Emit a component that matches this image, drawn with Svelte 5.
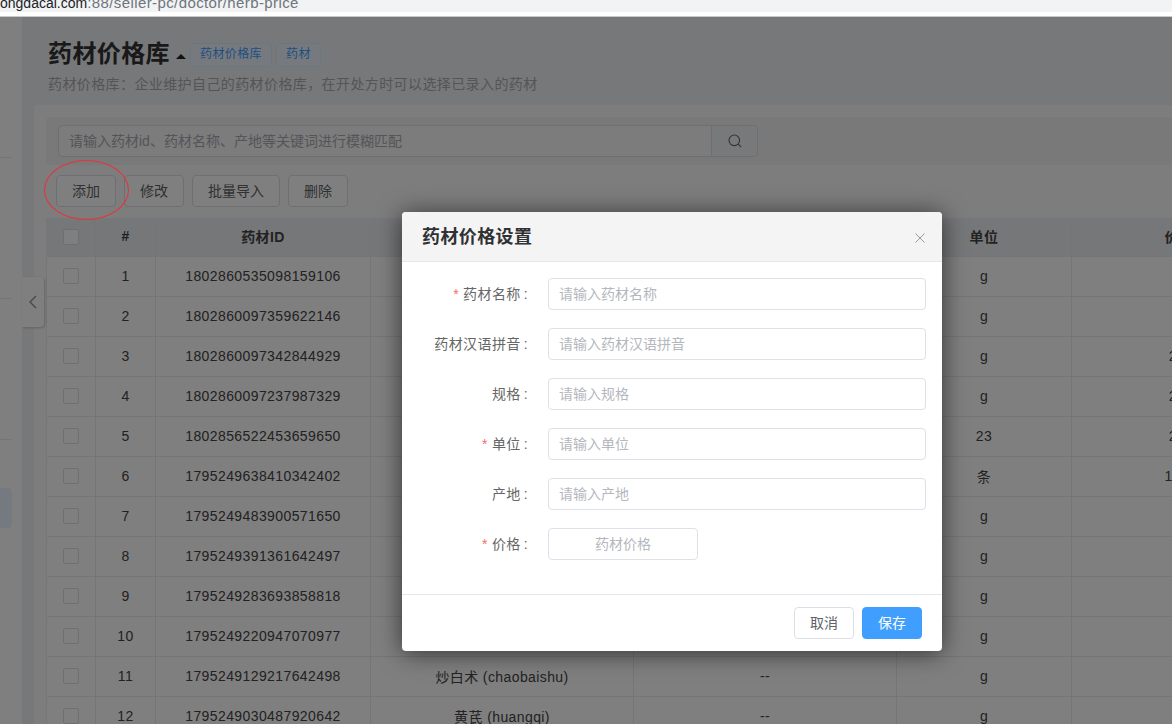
<script>
  const rows = [
    { id: '1802860535098159106', name: '', other: '', unit: 'g', price: '' },
    { id: '1802860097359622146', name: '', other: '', unit: 'g', price: '' },
    { id: '1802860097342844929', name: '', other: '', unit: 'g', price: '2.5' },
    { id: '1802860097237987329', name: '', other: '', unit: 'g', price: '2.5' },
    { id: '1802856522453659650', name: '', other: '', unit: '23', price: '2.5' },
    { id: '1795249638410342402', name: '', other: '', unit: '条', price: '15.5' },
    { id: '1795249483900571650', name: '', other: '', unit: 'g', price: '' },
    { id: '1795249391361642497', name: '', other: '', unit: 'g', price: '' },
    { id: '1795249283693858818', name: '', other: '', unit: 'g', price: '' },
    { id: '1795249220947070977', name: '', other: '', unit: 'g', price: '' },
    { id: '1795249129217642498', name: '炒白术 (chaobaishu)', other: '--', unit: 'g', price: '' },
    { id: '1795249030487920642', name: '黄芪 (huangqi)', other: '--', unit: 'g', price: '' }
  ];

  const fields = [
    { label: '药材名称', required: true, placeholder: '请输入药材名称' },
    { label: '药材汉语拼音', required: false, placeholder: '请输入药材汉语拼音' },
    { label: '规格', required: false, placeholder: '请输入规格' },
    { label: '单位', required: true, placeholder: '请输入单位' },
    { label: '产地', required: false, placeholder: '请输入产地' }
  ];
</script>

<div class="browser">
  <div class="url"><span class="host">ongdacai.com</span>:88/seller-pc/doctor/herb-price</div>
</div>

<div class="page">
  <aside class="sidebar">
    <div class="side-line"></div>
    <div class="side-line"></div>
    <div class="side-line"></div>
    <div class="side-active"></div>
  </aside>

  <main class="main">
    <button class="collapse" aria-label="收起">
      <svg width="10" height="14" viewBox="0 0 10 14"><path d="M8 1 2 7l6 6" fill="none" stroke="#8c8c8c" stroke-width="1.3" /></svg>
    </button>

    <header class="head">
      <div class="title-row">
        <h1>药材价格库</h1>
        <span class="caret"></span>
        <span class="tag">药材价格库</span>
        <span class="tag">药材</span>
      </div>
      <p class="desc">药材价格库：企业维护自己的药材价格库，在开处方时可以选择已录入的药材</p>
    </header>

    <section class="card">
      <div class="search-bar">
        <div class="search">
          <span class="search-text">请输入药材id、药材名称、产地等关键词进行模糊匹配</span>
          <span class="search-btn">
            <svg width="14" height="14" viewBox="0 0 14 14"><circle cx="6.3" cy="6.3" r="5.3" fill="none" stroke="#666" stroke-width="1.1" /><path d="m10.2 10.2 3 3" stroke="#666" stroke-width="1.1" /></svg>
          </span>
        </div>
      </div>

      <div class="actions">
        <button class="btn">添加</button>
        <button class="btn">修改</button>
        <button class="btn">批量导入</button>
        <button class="btn">删除</button>
      </div>

      <div class="table">
        <div class="tr th">
          <div class="td c0"><span class="check"></span></div>
          <div class="td c1">#</div>
          <div class="td c2">药材ID</div>
          <div class="td c3"></div>
          <div class="td c4"></div>
          <div class="td c5">单位</div>
          <div class="td c6">价格</div>
        </div>
        {#each rows as row, i}
          <div class="tr">
            <div class="td c0"><span class="check"></span></div>
            <div class="td c1">{i + 1}</div>
            <div class="td c2">{row.id}</div>
            <div class="td c3">{row.name}</div>
            <div class="td c4">{row.other}</div>
            <div class="td c5">{row.unit}</div>
            <div class="td c6">{row.price}</div>
          </div>
        {/each}
      </div>
    </section>
  </main>

  <div class="mask">
    <div class="dialog">
      <div class="dialog-head">
        <h2>药材价格设置</h2>
        <svg class="close" width="12" height="12" viewBox="0 0 12 12"><path d="m1.5 1.5 9 9m0-9-9 9" stroke="#999" stroke-width="1" /></svg>
      </div>
      <div class="dialog-body">
        {#each fields as f}
          <div class="field">
            <div class="label">
              {#if f.required}<span class="star">*</span>{/if}{f.label}<span class="colon">:</span>
            </div>
            <div class="input">{f.placeholder}</div>
          </div>
        {/each}
        <div class="field">
          <div class="label"><span class="star">*</span>价格<span class="colon">:</span></div>
          <div class="input short">药材价格</div>
        </div>
      </div>
      <div class="dialog-foot">
        <button class="btn plain">取消</button>
        <button class="btn primary">保存</button>
      </div>
    </div>
  </div>

  <!-- hand drawn annotation on the screenshot, sits above the mask -->
  <span class="ring"></span>
</div>

<style>
  :global(body) {
    margin: 0;
    height: 724px;
    overflow: hidden;
    font-family: "Liberation Sans", "Noto Sans CJK SC", sans-serif;
    font-size: 14px;
    letter-spacing: 0.4px;
    color: #515a6e;
  }

  .browser {
    height: 16px;
    background: #fff;
    border-bottom: 1px solid #c9c9c9;
    overflow: hidden;
  }

  .url {
    height: 12px;
    background: #f1f3f4;
    font-size: 15px;
    line-height: 5px;
    letter-spacing: 0.4px;
    color: #70757a;
    white-space: nowrap;
    overflow: hidden;
  }

  .host {
    font-size: 14px;
    letter-spacing: 0;
    color: #202124;
  }

  .page {
    position: relative;
    display: flex;
    height: 707px;
    overflow: hidden;
    background: #eff1f3;
  }

  .sidebar {
    width: 22px;
    flex: none;
    background: #fff;
    display: flex;
    flex-direction: column;
    align-items: flex-start;
  }

  .side-line {
    width: 12px;
    height: 1px;
    margin-top: 140px;
    background: #e8eaec;
  }

  .side-active {
    width: 12px;
    height: 40px;
    margin-top: 48px;
    background: #e8f4ff;
    border-radius: 0 4px 4px 0;
  }

  .main {
    position: relative;
    flex: 1;
    min-width: 0;
    padding-left: 12px;
  }

  .collapse {
    position: absolute;
    left: 0;
    top: 260px;
    width: 22px;
    height: 50px;
    padding: 0;
    border: 0;
    border-radius: 0 4px 4px 0;
    background: #fff;
    box-shadow: 1px 1px 3px rgba(0, 0, 0, 0.2);
    display: flex;
    align-items: center;
    justify-content: center;
    z-index: 1;
  }

  .head {
    height: 88px;
    padding: 23px 0 0 14px;
    box-sizing: border-box;
  }

  .title-row {
    display: flex;
    align-items: center;
    height: 28px;
  }

  h1 {
    margin: 0;
    font-size: 24px;
    line-height: 28px;
    font-weight: 700;
    color: #333;
  }

  .caret {
    width: 0;
    height: 0;
    margin: 4px 4px 0 6px;
    border-left: 5px solid transparent;
    border-right: 5px solid transparent;
    border-bottom: 5px solid #222;
  }

  .tag {
    height: 22px;
    line-height: 21px;
    margin-top: 2px;
    padding: 0 9px;
    margin-right: 4px;
    font-size: 12px;
    color: #409eff;
    background: #ecf5ff;
    border: 1px solid #d9ecff;
    border-radius: 4px;
  }

  .desc {
    margin: 6px 0 0;
    font-size: 14px;
    line-height: 20px;
    color: #aaa;
  }

  .card {
    background: #fbfbfb;
    padding: 12px 0 0 12px;
    border-radius: 4px 0 0 0;
    height: 620px;
  }

  .search-bar {
    height: 48px;
    background: #f3f3f3;
    border-radius: 4px;
    padding: 8px 0 0 12px;
    box-sizing: border-box;
  }

  .search {
    display: flex;
    width: 700px;
    height: 32px;
    box-sizing: border-box;
    border: 1px solid #dcdee2;
    border-radius: 4px;
    background: #f8f8f8;
  }

  .search-text {
    flex: 1;
    padding-left: 10px;
    line-height: 30px;
    letter-spacing: 0;
    color: #a8abb2;
  }

  .search-btn {
    width: 45px;
    background: #f0f2f5;
    border-left: 1px solid #dcdee2;
    border-radius: 0 4px 4px 0;
    display: flex;
    align-items: center;
    justify-content: center;
  }

  .actions {
    display: flex;
    gap: 8px;
    padding: 10px 0 0 10px;
    height: 43px;
  }

  .ring {
    position: absolute;
    left: 44px;
    top: 143px;
    width: 83px;
    height: 58px;
    border: 1px solid #e8323c;
    border-radius: 50%;
    z-index: 3;
  }

  .btn {
    height: 32px;
    padding: 0 15px 2px;
    font: inherit;
    color: #606266;
    background: #fff;
    border: 1px solid #dcdfe6;
    border-radius: 4px;
  }

  .table {
    width: 1240px;
    background: #fff;
    border-top: 1px solid #ebeef5;
    border-left: 1px solid #ebeef5;
  }

  .tr {
    display: flex;
    height: 40px;
    box-sizing: border-box;
    border-bottom: 1px solid #e8eaec;
  }

  .th {
    height: 38px;
    background: #eceff3;
    font-weight: 700;
  }

  .td {
    flex: none;
    box-sizing: border-box;
    padding-bottom: 1px;
    border-right: 1px solid #e8eaec;
    display: flex;
    align-items: center;
    justify-content: center;
    color: #444;
  }

  .th .td {
    padding-bottom: 4px;
  }

  .c0 { width: 49px; }
  .c1 { width: 60px; }
  .c2 { width: 215px; }
  .c3 { width: 263px; }
  .c4 { width: 263px; }
  .c5 { width: 175px; }
  .c6 { width: 215px; }

  .check {
    width: 14px;
    height: 14px;
    background: #fff;
    border: 1px solid #dcdfe6;
    border-radius: 2px;
  }

  .th .c0 {
    padding-bottom: 1px;
  }

  /* the dialog is off centre in the reference, the window was wider than the crop */
  .mask {
    position: absolute;
    inset: 0;
    background: rgba(0, 0, 0, 0.5);
    display: flex;
    align-items: flex-start;
    padding: 195px 0 0 402px;
    z-index: 2;
  }

  .dialog {
    width: 540px;
    height: 439px;
    flex: none;
    background: #fff;
    border-radius: 4px;
    box-shadow: 0 2px 24px rgba(0, 0, 0, 0.6);
    display: flex;
    flex-direction: column;
    overflow: hidden;
  }

  .dialog-head {
    height: 50px;
    box-sizing: border-box;
    flex: none;
    background: #f4f4f5;
    border-bottom: 1px solid #e4e7ed;
    display: flex;
    align-items: center;
    justify-content: space-between;
    padding: 0 16px 0 20px;
  }

  h2 {
    margin: 0 0 4px;
    font-size: 18px;
    font-weight: 700;
    color: #303133;
  }

  .close {
    margin-top: 3px;
  }

  .dialog-body {
    flex: 1;
    padding-top: 16px;
    display: flex;
    flex-direction: column;
    gap: 18px;
  }

  .field {
    display: flex;
    height: 32px;
    align-items: center;
  }

  .label {
    width: 146px;
    flex: none;
    box-sizing: border-box;
    padding: 0 20px 2px 0;
    text-align: right;
    color: #666;
  }

  .star {
    color: #f56c6c;
    margin-right: 4px;
  }

  .colon {
    margin-left: 3px;
  }

  .input {
    width: 378px;
    height: 32px;
    box-sizing: border-box;
    border: 1px solid #dfe0e8;
    border-radius: 4px;
    padding-left: 10px;
    line-height: 30px;
    letter-spacing: 0;
    color: #b4b7bd;
  }

  .input.short {
    width: 150px;
    padding: 0;
    text-align: center;
  }

  .dialog-foot {
    height: 56px;
    flex: none;
    border-top: 1px solid #e4e7ed;
    display: flex;
    justify-content: flex-end;
    align-items: center;
    gap: 8px;
    padding-right: 20px;
  }

  .primary {
    color: #fff;
    background: #409eff;
    border-color: #409eff;
  }
</style>
